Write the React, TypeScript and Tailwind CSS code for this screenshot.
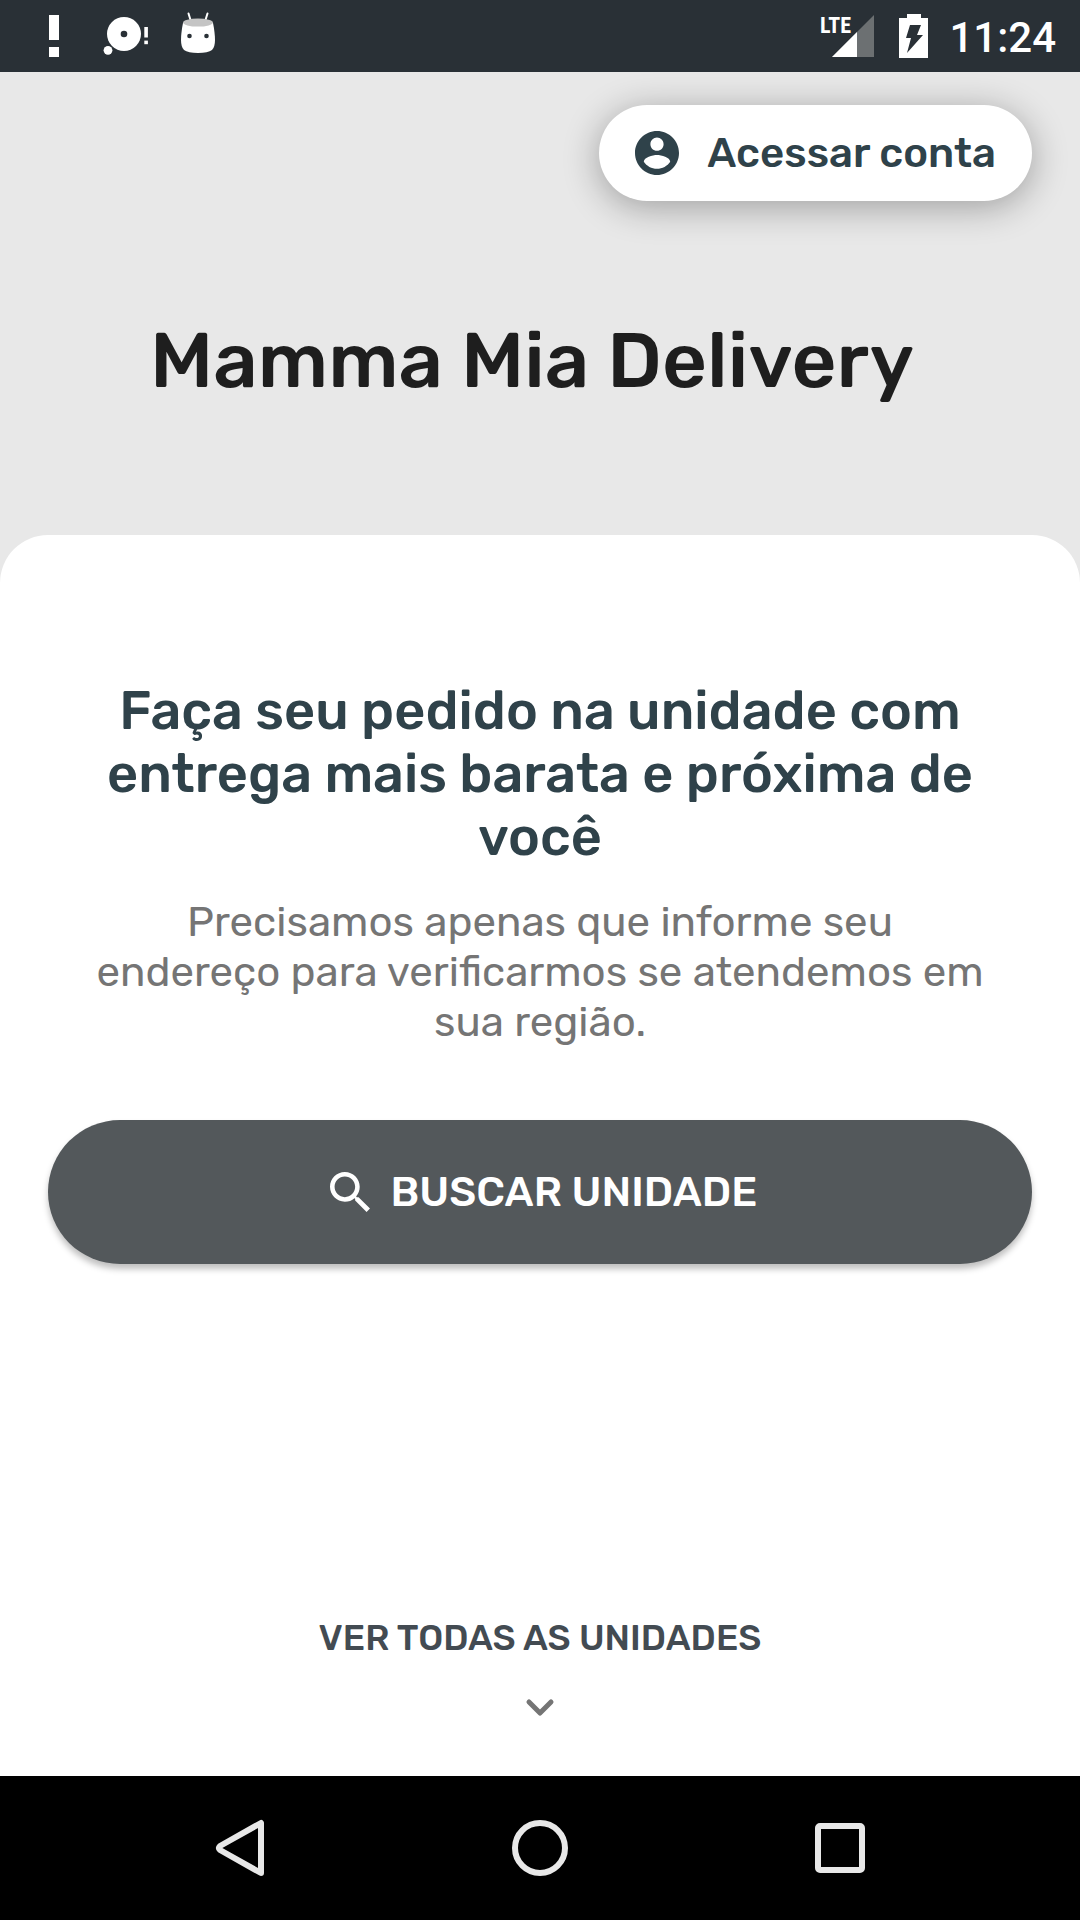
function StatusBar() {
  return (
    <div className="flex h-18 items-center justify-between bg-[#293036] pr-6 pl-11 text-white">
      <svg width="180" height="72" viewBox="44 0 180 72" aria-hidden="true">
        <rect x="49" y="15" width="10" height="25" fill="#fff" />
        <rect x="49" y="47" width="10" height="10" fill="#fff" />
        <circle cx="124" cy="34" r="17" fill="#fff" />
        <circle cx="124" cy="34" r="3.3" fill="#293036" />
        <circle cx="108" cy="50.3" r="4.4" fill="#fff" />
        <rect x="144.3" y="27" width="3.6" height="10.5" fill="#fff" />
        <rect x="144.3" y="40.6" width="3.6" height="3.6" fill="#fff" />
        <path d="M188.5 13.5l2.5 8M207.5 13.5l-2.5 8" stroke="#fff" strokeWidth="2" strokeLinecap="round" />
        <path d="M183 23q-2 10-2 17 0 7 3 10 4 3 14 3t14-3q3-3 3-10 0-7-2-17z" fill="#fff" />
        <ellipse cx="198" cy="22.6" rx="15" ry="4" fill="#c4c4c4" />
        <circle cx="189.5" cy="36" r="2.3" fill="#293036" />
        <circle cx="206.5" cy="36" r="2.3" fill="#293036" />
      </svg>
      <div className="flex items-center">
        <svg width="133" height="72" viewBox="816 0 133 72" role="img" aria-label="LTE">
          <text
            x="820"
            y="33"
            fill="#fff"
            className="font-['Roboto_Condensed','Liberation_Sans_Narrow',Roboto,sans-serif] text-[22px] font-bold"
          >
            LTE
          </text>
          <path d="M874 15v42h-42z" fill="#6c7072" />
          <path d="M857 32v25h-25z" fill="#fff" />
          <path d="M907 14h14v4h7v40h-29V18h8z" fill="#fff" />
          <path d="M910 25h11l-4 10h6l-16 18 4-15h-5z" fill="#293036" />
        </svg>
        <span className="pt-1 font-[Roboto,sans-serif] text-[42px] leading-none font-medium">11:24</span>
      </div>
    </div>
  );
}

function AccountIcon() {
  return (
    <svg viewBox="2 2 20 20" className="size-11" fill="currentColor" aria-hidden="true">
      <path d="M12 2C6.48 2 2 6.48 2 12s4.48 10 10 10 10-4.48 10-10S17.52 2 12 2zm0 3c1.66 0 3 1.34 3 3s-1.34 3-3 3-3-1.34-3-3 1.34-3 3-3zm0 14.2c-2.5 0-4.71-1.28-6-3.22.03-1.99 4-3.08 6-3.08 1.99 0 5.97 1.09 6 3.08-1.29 1.94-3.5 3.22-6 3.22z" />
    </svg>
  );
}

function SearchIcon() {
  return (
    <svg viewBox="3 3 17.5 17.5" className="size-10" fill="currentColor" aria-hidden="true">
      <path d="M15.5 14h-.79l-.28-.27C15.41 12.59 16 11.11 16 9.5 16 5.91 13.09 3 9.5 3S3 5.91 3 9.5 5.91 16 9.5 16c1.61 0 3.09-.59 4.23-1.57l.27.28v.79l5 4.99L20.49 19l-4.99-5zm-6 0C7.01 14 5 11.99 5 9.5S7.01 5 9.5 5 14 7.01 14 9.5 11.99 14 9.5 14z" />
    </svg>
  );
}

function NavBar() {
  return (
    <nav className="flex h-36 items-center justify-center gap-60 bg-black text-[#e8e8e8]">
      <button type="button" aria-label="Voltar">
        <svg width="60" height="60" viewBox="210 1818 60 60" fill="none" stroke="currentColor" strokeWidth="6" strokeLinejoin="round">
          <path d="M261 1823v50l-41-23q-2-2 0-4z" />
        </svg>
      </button>
      <button type="button" aria-label="Início">
        <svg width="60" height="60" fill="none" stroke="currentColor" strokeWidth="6">
          <circle cx="30" cy="30" r="25" />
        </svg>
      </button>
      <button type="button" aria-label="Recentes">
        <svg width="60" height="60" fill="none" stroke="currentColor" strokeWidth="6">
          <rect x="8" y="8" width="44" height="44" rx="2" />
        </svg>
      </button>
    </nav>
  );
}

export default function App() {
  return (
    <div className="flex min-h-screen flex-col bg-[#e8e8e8] font-[Rubik,Inter,sans-serif]">
      <StatusBar />

      <header className="flex flex-col px-12 pt-[33px]">
        <button
          type="button"
          className="flex h-24 items-center gap-7 self-end rounded-full bg-white px-9 text-[42px] font-medium text-[#2f424a] shadow-[0_6px_36px_rgba(0,0,0,0.32)]"
        >
          <AccountIcon />
          Acessar conta
        </button>
        <h1 className="mt-28 mb-[126px] pr-4 text-center text-[78px] leading-24 font-medium text-[#1e1e1e]">
          Mamma Mia Delivery
        </h1>
      </header>

      <main className="flex grow flex-col rounded-t-[48px] bg-white px-12 pt-[145px] pb-[58px]">
        <section className="flex flex-col gap-7 px-12 text-center">
          <h2 className="text-[54px] leading-[63px] font-medium text-[#2f424a]">
            Faça seu pedido na unidade com entrega mais barata e próxima de você
          </h2>
          <p className="text-[42px] leading-[50px] text-[#757575]">
            Precisamos apenas que informe seu endereço para verificarmos se atendemos em sua região.
          </p>
        </section>

        <button
          type="button"
          className="mt-[73px] flex h-36 items-center justify-center gap-5 rounded-full bg-[#53585b] pl-2 text-[42px] font-medium text-white shadow-[0_5px_6px_rgba(0,0,0,0.25)]"
        >
          <SearchIcon />
          BUSCAR UNIDADE
        </button>

        <button
          type="button"
          className="mt-auto flex flex-col items-center gap-9 self-center text-[36px] leading-12 font-medium text-[#434b52]"
        >
          VER TODAS AS UNIDADES
          <svg width="30" height="20" viewBox="0 0 30 20" fill="none" aria-hidden="true">
            <path d="M4 4l11 11L26 4" stroke="#757575" strokeWidth="5" strokeLinecap="round" strokeLinejoin="round" />
          </svg>
        </button>
      </main>

      <NavBar />
    </div>
  );
}
